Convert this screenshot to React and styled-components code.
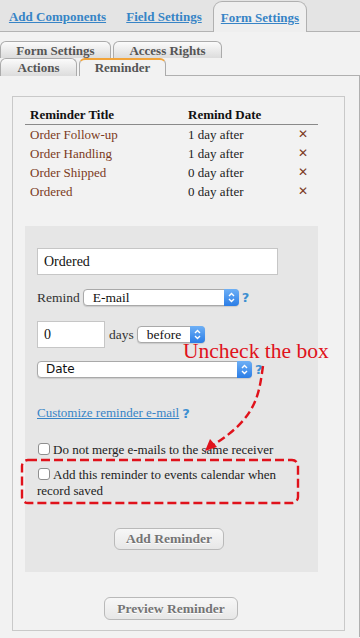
import React from "react";
import styled, { createGlobalStyle, css } from "styled-components";

const GlobalStyle = createGlobalStyle`
  html, body {
    margin: 0;
    padding: 0;
    background: #f2f2f2;
  }
  body {
    width: 360px;
    height: 638px;
    overflow: hidden;
    font-family: "Liberation Serif", "Times New Roman", serif;
  }
`;

const Page = styled.div`
  width: 360px;
  height: 638px;
  overflow: hidden;
  background: #f2f2f2;
  position: relative;
`;

/* top level tabs */
const TopBar = styled.div`
  display: flex;
  align-items: flex-end;
  height: 31px;
  background: #e4e4e4;
  border-bottom: 1px solid #b3b3b3;
`;

const TopTab = styled.a`
  box-sizing: border-box;
  height: 30px;
  line-height: 32px;
  width: ${(p) => p.$w}px;
  text-align: center;
  font-size: 13px;
  font-weight: bold;
  color: #3784c6;
  text-decoration: underline;
  cursor: pointer;
  ${(p) =>
    p.$active &&
    css`
      height: 31px;
      margin-bottom: -1px;
      background: #efefef;
      border: 1px solid #b0b0b0;
      border-bottom: none;
      border-radius: 9px 9px 0 0;
    `}
`;

/* sub tabs */
const SubTabs = styled.div`
  padding-top: 9px;
`;

const SubRow = styled.div`
  display: flex;
  gap: 2px;
  height: ${(p) => p.$h}px;
  align-items: flex-end;
`;

const SubTab = styled.div`
  box-sizing: border-box;
  width: ${(p) => p.$w}px;
  height: 100%;
  text-align: center;
  font-size: 13px;
  font-weight: bold;
  color: #555;
  line-height: 18px;
  border: 1px solid #ababab;
  border-bottom: none;
  border-radius: 6px 6px 0 0;
  background: linear-gradient(#fbfbfb, #dcdcdc);
  ${(p) =>
    p.$active &&
    css`
      border-top: 2px solid #f2a43a;
      background: #f2f2f2;
      line-height: 16px;
    `}
`;

const TabFiller = styled.div`
  flex: 1;
  align-self: stretch;
  border-bottom: 1px solid #b0b0b0;
  margin-left: -2px;
`;

const Content = styled.div`
  border-right: 1px solid #b0b0b0;
  padding: 20px 14px 0 12px;
  height: 541px;
`;

const Panel = styled.div`
  border: 1px solid #c9c9c9;
  padding: 8px 12px 10px 12px;
  height: 515px;
`;

/* reminder table */
const Table = styled.div`
  width: 293px;
  font-size: 13px;
`;

const HeadRow = styled.div`
  display: grid;
  grid-template-columns: 158px 1fr;
  height: 19px;
  line-height: 20px;
  padding-left: 5px;
  font-weight: bold;
  color: #111;
  border-bottom: 1px solid #8a8a8a;
`;

const Row = styled.div`
  display: grid;
  grid-template-columns: 158px 110px 1fr;
  height: 19px;
  line-height: 19px;
  padding-left: 5px;
  color: #222;
`;

const TitleCell = styled.span`
  color: #7b3a22;
`;

const DeleteCell = styled.span`
  color: #7b3a22;
  font-family: "DejaVu Sans", sans-serif;
  font-size: 12px;
`;

/* the form box */
const FormBox = styled.div`
  position: relative;
  margin-top: 25px;
  width: 269px;
  height: 302px;
  padding: 22px 12px;
  background: #e6e6e6;
`;

const TextInput = styled.div`
  box-sizing: border-box;
  width: ${(p) => p.$w}px;
  height: 27px;
  background: #fff;
  border: 1px solid #c6c6c6;
  padding-left: 6px;
  line-height: 25px;
  font-size: 14px;
  color: #111;
`;

const Line = styled.div`
  display: flex;
  align-items: center;
  margin-top: ${(p) => p.$mt}px;
  font-size: 13.5px;
  color: #333;
`;

const Label = styled.span`
  margin-right: ${(p) => p.$mr || 3}px;
  margin-left: ${(p) => p.$ml || 0}px;
`;

const Select = styled.div`
  box-sizing: border-box;
  position: relative;
  width: ${(p) => p.$w}px;
  height: 17px;
  background: #fff;
  border: 1px solid #a9a9a9;
  border-radius: 4px;
  box-shadow: 0 1px 1px rgba(0, 0, 0, 0.12);
  padding-left: ${(p) => (p.$sans ? 8 : 9)}px;
  line-height: 15px;
  font-size: ${(p) => (p.$sans ? 12 : 13.5)}px;
  font-family: ${(p) =>
    p.$sans ? `"DejaVu Sans", "Liberation Sans", sans-serif` : "inherit"};
  color: #111;
`;

const SelectButton = styled.span`
  position: absolute;
  top: -1px;
  right: -1px;
  width: 15px;
  height: 17px;
  border-radius: 0 4px 4px 0;
  background: linear-gradient(#6eb0f6, #2b7de6);
  display: flex;
  align-items: center;
  justify-content: center;
`;

const Help = styled.span`
  margin-left: 3px;
  font-family: "DejaVu Sans", sans-serif;
  font-weight: bold;
  font-size: 13px;
  color: #3d8fd1;
`;

const LinkText = styled.a`
  color: #3784c6;
  text-decoration: underline;
  font-size: 13px;
`;

const CheckLine = styled.div`
  margin-top: ${(p) => p.$mt}px;
  font-size: 13px;
  line-height: 16px;
  color: #222;
  padding-right: 20px;
`;

const Box = styled.span`
  display: inline-block;
  box-sizing: border-box;
  width: 12px;
  height: 12px;
  background: #fff;
  border: 1px solid #8f8f8f;
  border-radius: 3px;
  vertical-align: -1px;
  margin: 0 3px 0 1px;
`;

const Button = styled.div`
  box-sizing: border-box;
  width: ${(p) => p.$w}px;
  height: ${(p) => p.$h}px;
  margin: ${(p) => p.$mt}px 0 0 ${(p) => p.$ml}px;
  border: 1px solid #b9b9b9;
  border-radius: 6px;
  background: linear-gradient(#f7f7f7, #e7e7e7);
  text-align: center;
  line-height: ${(p) => p.$h - 2}px;
  font-size: 13.5px;
  font-weight: bold;
  color: #747474;
  text-shadow: 0 1px 0 #fff;
`;

const Note = styled.div`
  position: absolute;
  left: 158px;
  top: 113px;
  font-size: 21.5px;
  color: #e0121b;
  white-space: nowrap;
`;

const Overlay = styled.svg`
  position: absolute;
  left: 0;
  top: 0;
  pointer-events: none;
  overflow: visible;
`;

const Chevrons = () => (
  <svg width="9" height="13" viewBox="0 0 9 13">
    <path
      d="M2 5 L4.5 2.5 L7 5 M2 8 L4.5 10.5 L7 8"
      fill="none"
      stroke="#fff"
      strokeWidth="1.4"
    />
  </svg>
);

const FakeSelect = ({ w, sans, children }) => (
  <Select $w={w} $sans={sans}>
    {children}
    <SelectButton>
      <Chevrons />
    </SelectButton>
  </Select>
);

const reminders = [
  { title: "Order Follow-up", date: "1 day after" },
  { title: "Order Handling", date: "1 day after" },
  { title: "Order Shipped", date: "0 day after" },
  { title: "Ordered", date: "0 day after" },
];

export default function App() {
  return (
    <Page>
      <GlobalStyle />
      <TopBar>
        <TopTab $w={115}>Add Components</TopTab>
        <TopTab $w={98}>Field Settings</TopTab>
        <TopTab $w={94} $active>
          Form Settings
        </TopTab>
      </TopBar>

      <SubTabs>
        <SubRow $h={17}>
          <SubTab $w={111}>Form Settings</SubTab>
          <SubTab $w={109}>Access Rights</SubTab>
        </SubRow>
        <SubRow $h={18}>
          <SubTab $w={77}>Actions</SubTab>
          <SubTab $w={87} $active>
            Reminder
          </SubTab>
          <TabFiller />
        </SubRow>
      </SubTabs>

      <Content>
        <Panel>
          <Table>
            <HeadRow>
              <span>Reminder Title</span>
              <span>Remind Date</span>
            </HeadRow>
            {reminders.map((r) => (
              <Row key={r.title}>
                <TitleCell>{r.title}</TitleCell>
                <span>{r.date}</span>
                <DeleteCell>✕</DeleteCell>
              </Row>
            ))}
          </Table>

          <FormBox>
            <TextInput $w={241}>Ordered</TextInput>
            <Line $mt={14}>
              <Label>Remind</Label>
              <FakeSelect w={156}>E-mail</FakeSelect>
              <Help>?</Help>
            </Line>
            <Line $mt={15}>
              <TextInput $w={68}>0</TextInput>
              <Label $ml={4} $mr={3}>
                days
              </Label>
              <FakeSelect w={68}>before</FakeSelect>
            </Line>
            <Line $mt={13}>
              <FakeSelect w={215} sans>
                Date
              </FakeSelect>
              <Help>?</Help>
            </Line>
            <Line $mt={27}>
              <LinkText>Customize reminder e-mail</LinkText>
              <Help>?</Help>
            </Line>
            <CheckLine $mt={21}>
              <Box />
              Do not merge e-mails to the same receiver
            </CheckLine>
            <CheckLine $mt={9}>
              <Box />
              Add this reminder to events calendar when record saved
            </CheckLine>
            <Button $w={110} $h={22} $mt={29} $ml={77}>
              Add Reminder
            </Button>

            <Note>Uncheck the box</Note>
            <Overlay width="293" height="346">
              <path
                d="M238 140 C 234 168, 232 192, 188 219"
                fill="none"
                stroke="#e0121b"
                strokeWidth="2.4"
                strokeDasharray="8 4"
              />
              <path d="M180 225 L185 213 L192 221 Z" fill="#e0121b" />
              <rect
                x="-3"
                y="234"
                width="276"
                height="43"
                rx="6"
                fill="none"
                stroke="#e0121b"
                strokeWidth="2.4"
                strokeDasharray="9 4"
              />
            </Overlay>
          </FormBox>

          <Button $w={134} $h={23} $mt={25} $ml={79}>
            Preview Reminder
          </Button>
        </Panel>
      </Content>
    </Page>
  );
}
